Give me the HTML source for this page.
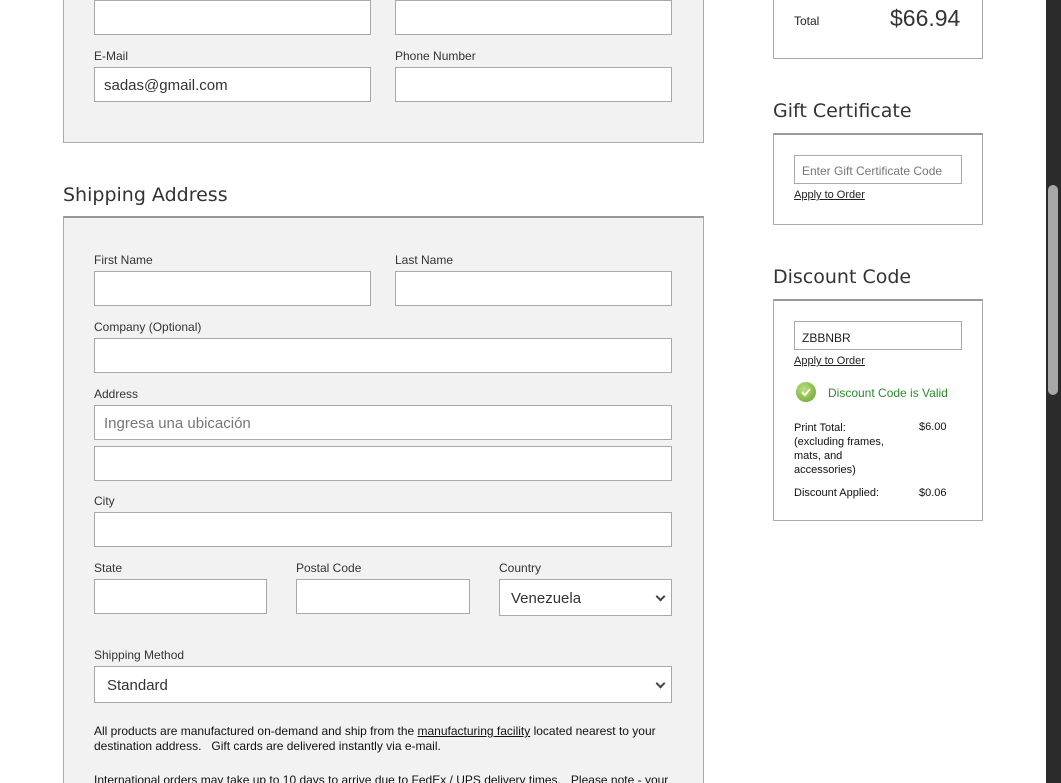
<!DOCTYPE html>
<html style="overflow:hidden;height:783px"><head><meta charset="utf-8"><style>
*{box-sizing:border-box;margin:0;padding:0}
html,body{overflow:hidden}
body{width:1061px;height:783px;overflow:hidden;background:#fff;font-family:"Liberation Sans",Arial,sans-serif;color:#222;position:relative}
.a{position:absolute}
.panel{position:absolute;background:#f2f2f2;border:1px solid #aaa}
.inp{position:absolute;background:#fff;border:1px solid #a9a9a9;height:35px;font-size:15px;color:#333;padding:9px 9px;line-height:17px}
.lbl{position:absolute;font-size:12px;color:#333;top:0}
h2{position:absolute;font-family:"DejaVu Sans",sans-serif;font-weight:normal;font-size:19px;color:#333;letter-spacing:0}
.box{position:absolute;background:#fff;border:1px solid #aaa}
.lnk{position:absolute;font-size:11px;text-decoration:underline;color:#222}
.sel:after{content:"";position:absolute;right:7px;top:13px;width:5px;height:5px;border-right:2px solid #444;border-bottom:2px solid #444;transform:rotate(45deg)}
.s{font-size:11px;position:absolute;color:#111}
</style></head><body>
<div class="panel" style="left:63px;top:-2px;width:641px;height:145px"></div>
<div class="inp" style="left:94px;top:0;width:277px;height:35px"></div>
<div class="inp" style="left:395px;top:0;width:277px;height:35px"></div>
<div class="lbl" style="left:94px;top:49px">E-Mail</div>
<div class="lbl" style="left:395px;top:49px">Phone Number</div>
<div class="inp" style="left:94px;top:67px;width:277px">sadas@gmail.com</div>
<div class="inp" style="left:395px;top:67px;width:277px"></div>

<h2 style="left:63px;top:184px">Shipping Address</h2>
<div class="panel" style="left:63px;top:216px;width:641px;height:580px;border-top:2px solid #999"></div>
<div class="lbl" style="left:94px;top:253px">First Name</div>
<div class="lbl" style="left:395px;top:253px">Last Name</div>
<div class="inp" style="left:94px;top:271px;width:277px"></div>
<div class="inp" style="left:395px;top:271px;width:277px"></div>
<div class="lbl" style="left:94px;top:320px">Company (Optional)</div>
<div class="inp" style="left:94px;top:338px;width:578px"></div>
<div class="lbl" style="left:94px;top:387px">Address</div>
<div class="inp" style="left:94px;top:405px;width:578px;color:#777">Ingresa una ubicación</div>
<div class="inp" style="left:94px;top:446px;width:578px"></div>
<div class="lbl" style="left:94px;top:494px">City</div>
<div class="inp" style="left:94px;top:512px;width:578px"></div>
<div class="lbl" style="left:94px;top:561px">State</div>
<div class="lbl" style="left:296px;top:561px">Postal Code</div>
<div class="lbl" style="left:499px;top:561px">Country</div>
<div class="inp" style="left:94px;top:579px;width:173px"></div>
<div class="inp" style="left:296px;top:579px;width:174px"></div>
<div class="inp sel" style="left:499px;top:579px;width:173px;height:37px;padding:10px 11px">Venezuela</div>
<div class="lbl" style="left:94px;top:648px">Shipping Method</div>
<div class="inp sel" style="left:94px;top:666px;width:578px;height:37px;padding:10px 12px">Standard</div>
<div class="a" style="left:94px;top:724px;width:590px;font-size:12px;line-height:15px;color:#111">All products are manufactured on-demand and ship from the <u>manufacturing facility</u> located nearest to your destination address.&nbsp;&nbsp; Gift cards are delivered instantly via e-mail.</div>
<div class="a" style="left:94px;top:773px;width:600px;font-size:12px;line-height:15px;color:#111;white-space:nowrap">International orders may take up to 10 days to arrive due to FedEx / UPS delivery times.&nbsp;&nbsp; Please note - your</div>

<div class="box" style="left:773px;top:-2px;width:210px;height:61px"></div>
<div class="a" style="left:794px;top:14px;font-size:12px">Total</div>
<div class="a" style="left:890px;top:5px;font-size:23px;color:#333">$66.94</div>

<h2 style="left:773px;top:100px">Gift Certificate</h2>
<div class="box" style="left:773px;top:133px;width:210px;height:92px;border-top:2px solid #999"></div>
<div class="inp" style="left:794px;top:155px;width:168px;height:29px;font-size:12px;color:#777;padding:7px 7px">Enter Gift Certificate Code</div>
<div class="lnk" style="left:794px;top:189px">Apply to Order</div>

<h2 style="left:773px;top:266px">Discount Code</h2>
<div class="box" style="left:773px;top:299px;width:210px;height:222px;border-top:2px solid #999"></div>
<div class="inp" style="left:794px;top:321px;width:168px;height:29px;font-size:12px;color:#222;padding:8px 7px">ZBBNBR</div>
<div class="lnk" style="left:794px;top:355px">Apply to Order</div>
<div class="a" style="left:796px;top:382px;width:20px;height:20px;border-radius:50%;background:radial-gradient(circle at 40% 35%,#b8e07a,#6a9e2c)"><svg width="20" height="20"><path d="M6 10l3 3 5-6" stroke="#fff" stroke-width="2" fill="none"/></svg></div>
<div class="a" style="left:828px;top:386px;font-size:12px;color:#2c8a2c">Discount Code is Valid</div>
<div class="s" style="left:794px;top:421px;line-height:14px;width:100px">Print Total:<br>(excluding frames, mats, and accessories)</div>
<div class="s" style="left:919px;top:421px">$6.00</div>
<div class="s" style="left:794px;top:487px">Discount Applied:</div>
<div class="s" style="left:919px;top:487px">$0.06</div>

<div class="a" style="left:1046px;top:0;width:15px;height:783px;background:#2b2b2b"></div>
<div class="a" style="left:1048px;top:185px;width:10px;height:210px;background:#a8a8a8;border-radius:5px"></div>
</body></html>
